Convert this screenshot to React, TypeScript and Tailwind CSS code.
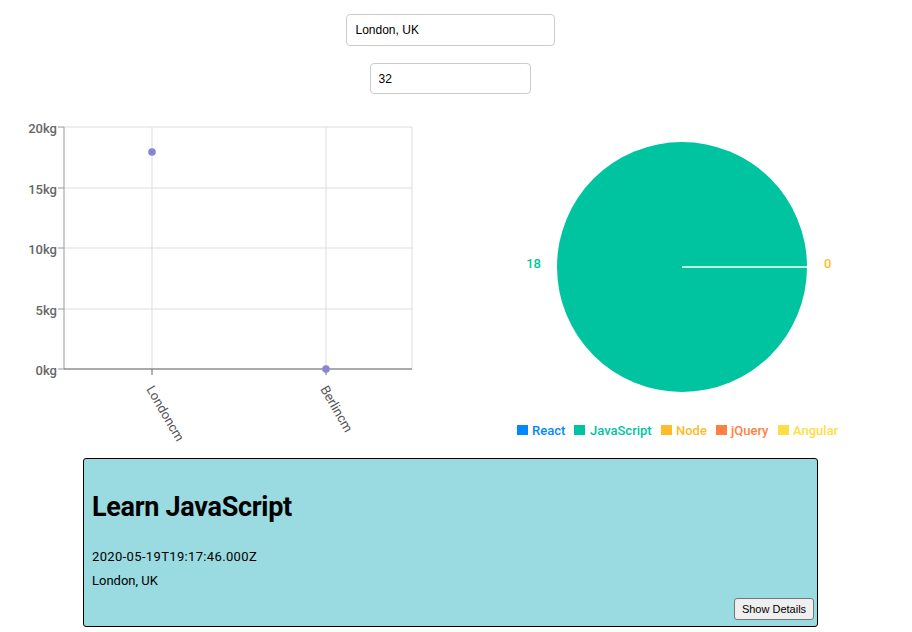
import React from "react";

const ticksY = [
  { y: 17, l: "20kg" },
  { y: 78, l: "15kg" },
  { y: 138, l: "10kg" },
  { y: 199, l: "5kg" },
  { y: 259, l: "0kg" },
];

function LineChartSvg() {
  return (
    <svg width={450} height={340} className="block" style={{ fontFamily: "Roboto, sans-serif" }}>
      {ticksY.map((t) => (
        <line key={t.y} x1={64} x2={412} y1={t.y} y2={t.y} stroke="#ddd" strokeWidth={1} />
      ))}
      {[152, 326, 412].map((x) => (
        <line key={x} x1={x} x2={x} y1={17} y2={259} stroke="#ddd" strokeWidth={1} />
      ))}
      <line x1={64} x2={64} y1={17} y2={259} stroke="#999" strokeWidth={1} />
      {ticksY.map((t) => (
        <g key={"t" + t.y}>
          <line x1={58} x2={64} y1={t.y} y2={t.y} stroke="#999" />
          <text x={57} y={t.y + 1} dy="0.35em" textAnchor="end" fill="#666" fontSize={13} fontWeight={500}>
            {t.l}
          </text>
        </g>
      ))}
      <line x1={64} x2={412} y1={259} y2={259} stroke="#666" strokeWidth={1} />
      {[152, 326].map((x) => (
        <line key={"xt" + x} x1={x} x2={x} y1={259} y2={265} stroke="#666" />
      ))}
      <text x={146} y={279} transform="rotate(60 146 279)" textAnchor="start" fill="#555" fontSize={13}>
        Londoncm
      </text>
      <text x={320} y={279} transform="rotate(60 320 279)" textAnchor="start" fill="#555" fontSize={13}>
        Berlincm
      </text>
      <circle cx={152} cy={42} r={3.8} fill="#8884d8" />
      <circle cx={326} cy={259} r={3.8} fill="#8884d8" />
    </svg>
  );
}

const legend = [
  { sx: 67, tx: 82, c: "#0088FE", l: "React" },
  { sx: 124, tx: 140, c: "#00C49F", l: "JavaScript" },
  { sx: 211, tx: 226, c: "#FFBB28", l: "Node" },
  { sx: 266, tx: 281, c: "#FF8042", l: "jQuery" },
  { sx: 328, tx: 343, c: "#FFDD44", l: "Angular" },
];

function PieChartSvg() {
  const cx = 232;
  const cy = 157;
  const r = 125;
  return (
    <svg width={450} height={340} className="block" style={{ fontFamily: "Roboto, sans-serif" }}>
      <circle cx={cx} cy={cy} r={r} fill="#00C49F" />
      <line x1={cx} y1={cy} x2={cx + r} y2={cy} stroke="#ffffff" strokeWidth={1.5} />
      <text x={91} y={153} dy="0.35em" textAnchor="end" fill="#00C49F" fontSize={13} fontWeight={500}>
        18
      </text>
      <text x={374} y={153} dy="0.35em" textAnchor="start" fill="#FFBB28" fontSize={13} fontWeight={500}>
        0
      </text>
      {legend.map((it) => (
        <g key={it.l}>
          <rect x={it.sx} y={315} width={11} height={10} fill={it.c} />
          <text x={it.tx} y={320} dy="0.35em" fill={it.c} fontSize={13} fontWeight={500}>
            {it.l}
          </text>
        </g>
      ))}
    </svg>
  );
}

export default function App() {
  return (
    <div className="w-[900px] bg-white flex flex-col items-center pt-[14px]" style={{ fontFamily: "Roboto, sans-serif" }}>
      <input
        defaultValue="London, UK"
        className="w-[209px] h-[32px] border border-[#cccccc] rounded-[4px] pl-[9px] text-[12px] text-black outline-none"
        style={{ fontFamily: '"Liberation Sans", Arial, sans-serif' }}
      />
      <input
        defaultValue="32"
        className="mt-[17px] w-[161px] h-[31px] border border-[#cccccc] rounded-[4px] pl-[8px] text-[12px] text-black outline-none"
        style={{ fontFamily: '"Liberation Sans", Arial, sans-serif' }}
      />
      <div className="mt-[16px] flex w-full">
        <LineChartSvg />
        <PieChartSvg />
      </div>
      <div className="mt-[8px] self-start ml-[83px] w-[735px] h-[169px] bg-[#99dbe1] border border-black rounded-[3px] flex flex-col pl-[8px] pr-[3px]">
        <h1 className="mt-[32px] text-[27px] leading-[32px] font-bold tracking-[-0.3px] text-black">Learn JavaScript</h1>
        <p className="mt-[26px] text-[13px] leading-[15px] tracking-[0.35px] text-black">2020-05-19T19:17:46.000Z</p>
        <p className="mt-[9px] text-[13px] leading-[15px] text-black">London, UK</p>
        <div className="flex justify-end mt-[10px]">
          <button
            className="w-[80px] h-[22px] bg-[#efefef] border border-[#767676] rounded-[3px] text-[11px] text-black"
            style={{ fontFamily: '"Liberation Sans", Arial, sans-serif' }}
          >
            Show Details
          </button>
        </div>
      </div>
    </div>
  );
}
